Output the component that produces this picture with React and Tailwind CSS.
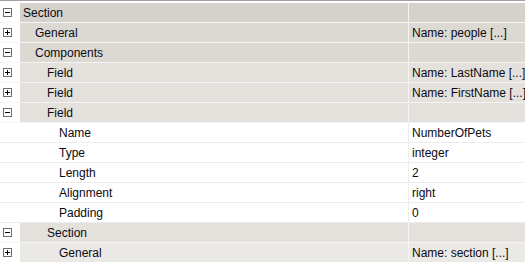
import React from "react";

const rows = [
  { label: "Section", depth: 0, toggle: "minus", value: "", kind: "group" },
  { label: "General", depth: 1, toggle: "plus", value: "Name: people [...]", kind: "group" },
  { label: "Components", depth: 1, toggle: "minus", value: "", kind: "group" },
  { label: "Field", depth: 2, toggle: "plus", value: "Name: LastName [...]", kind: "group" },
  { label: "Field", depth: 2, toggle: "plus", value: "Name: FirstName [...]", kind: "group" },
  { label: "Field", depth: 2, toggle: "minus", value: "", kind: "group" },
  { label: "Name", depth: 3, value: "NumberOfPets", kind: "prop" },
  { label: "Type", depth: 3, value: "integer", kind: "prop" },
  { label: "Length", depth: 3, value: "2", kind: "prop" },
  { label: "Alignment", depth: 3, value: "right", kind: "prop" },
  { label: "Padding", depth: 3, value: "0", kind: "prop" },
  { label: "Section", depth: 2, toggle: "minus", value: "", kind: "group" },
  { label: "General", depth: 3, toggle: "plus", value: "Name: section [...]", kind: "group" },
];

const bgByDepth = ["bg-[#d5d2cb]", "bg-[#dcd9d3]", "bg-[#e4e1dc]", "bg-[#ebe9e5]"];
const padByDepth = ["pl-[3px]", "pl-[15px]", "pl-[27px]", "pl-[39px]"];

function Toggle({ type }) {
  return (
    <div className="relative w-[9px] h-[9px] border border-[#6e6e6e] bg-white">
      <div className="absolute left-[1px] top-[3px] w-[5px] h-px bg-black" />
      {type === "plus" && <div className="absolute left-[3px] top-[1px] w-px h-[5px] bg-black" />}
    </div>
  );
}

export default function App() {
  return (
    <div
      className="w-[525px] h-[262px] bg-white border-t border-[#a0a0a0] pt-[2px] overflow-hidden text-[12px] text-[#0a0a14]"
      style={{ fontFamily: '"Liberation Sans", Arial, sans-serif' }}
    >
      {rows.map((r, i) => {
        const isProp = r.kind === "prop";
        const bg = isProp ? "bg-white" : bgByDepth[r.depth];
        const sep = isProp ? "border-[#ededed]" : "border-[#f4f4f4]";
        return (
          <div key={i} className={`flex h-[20px] border-b ${sep}`}>
            <div className="w-[20px] shrink-0 bg-white flex items-center pl-[3px]">
              {r.toggle && <Toggle type={r.toggle} />}
            </div>
            <div className={`w-[388px] shrink-0 ${bg} flex items-center ${padByDepth[r.depth]}`}>
              {r.label}
            </div>
            <div className={`w-px shrink-0 ${isProp ? "bg-[#ededed]" : "bg-[#f4f4f4]"}`} />
            <div className={`flex-1 ${bg} flex items-center pl-[3px] whitespace-nowrap overflow-hidden`}>
              {r.value}
            </div>
          </div>
        );
      })}
    </div>
  );
}
